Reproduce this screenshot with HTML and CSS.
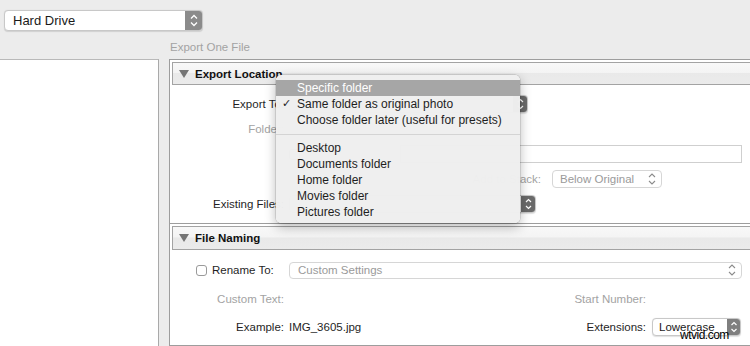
FILE: index.html
```html
<!DOCTYPE html>
<html>
<head>
<meta charset="utf-8">
<title>Export</title>
<link rel="stylesheet" href="styles.css">
</head>
<body>
<div class="topbar">
  <div class="popup popup-lg">
    <span class="ptext">Hard Drive</span>
    <span class="stepper stepper-lg"><svg width="18" height="19" viewBox="0 0 18 19"><path d="M6 7.5 L9 4.5 L12 7.5 M6 11.5 L9 14.5 L12 11.5" fill="none" stroke="#fff" stroke-width="1.3"/></svg></span>
  </div>
</div>
<div class="caption">Export One File</div>
<div class="main">
  <div class="sidebar"></div>
  <div class="panel">
    <section class="section">
      <div class="sec-head"><svg class="tri" width="10" height="8" viewBox="0 0 10 8"><polygon points="0,0 10,0 5,8" fill="#757575"/></svg><span>Export Location</span></div>
      <div class="sec-body body1">
        <div class="row">
          <span class="label">Export To:</span>
          <div class="popup w-export"><span class="ptext"></span><span class="stepper dark"><svg width="15" height="18" viewBox="0 0 15 18"><path d="M5 7 L7.5 4.5 L10 7 M5 11 L7.5 13.5 L10 11" fill="none" stroke="#fff" stroke-width="1.2"/></svg></span></div>
        </div>
        <div class="row">
          <span class="label dim">Folder:</span>
        </div>
        <div class="row">
          <span class="label"></span>
          <span class="sub-wrap"><span class="chk"></span></span>
          <div class="field"></div>
        </div>
        <div class="row">
          <span class="label"></span>
          <span class="stack-label dim"><span>Add to Stack:</span></span>
          <div class="popup disabled w-stack"><span class="ptext">Below Original</span><span class="chev"><svg width="10" height="14" viewBox="0 0 10 14"><path d="M2 5 L5 2 L8 5 M2 9 L5 12 L8 9" fill="none" stroke="#8c8c8c" stroke-width="1.1"/></svg></span></div>
        </div>
        <div class="row r-existing">
          <span class="label">Existing Files:</span>
          <div class="popup w-existing"><span class="ptext"></span><span class="stepper dark"><svg width="15" height="18" viewBox="0 0 15 18"><path d="M5 7 L7.5 4.5 L10 7 M5 11 L7.5 13.5 L10 11" fill="none" stroke="#fff" stroke-width="1.2"/></svg></span></div>
        </div>
      </div>
    </section>
    <section class="section">
      <div class="sec-head head2"><svg class="tri" width="10" height="8" viewBox="0 0 10 8"><polygon points="0,0 10,0 5,8" fill="#757575"/></svg><span>File Naming</span></div>
      <div class="sec-body body2">
        <div class="row">
          <span class="label label-left"><span class="chk"></span><span>Rename To:</span></span>
          <div class="popup disabled grow"><span class="ptext">Custom Settings</span><span class="chev"><svg width="10" height="14" viewBox="0 0 10 14"><path d="M2 5 L5 2 L8 5 M2 9 L5 12 L8 9" fill="none" stroke="#8c8c8c" stroke-width="1.1"/></svg></span></div>
        </div>
        <div class="row r-custom">
          <span class="label dim">Custom Text:</span>
          <span class="right-label dim">Start Number:</span>
          <span class="right-box"></span>
        </div>
        <div class="row r-example">
          <span class="label">Example:</span>
          <span>IMG_3605.jpg</span>
          <span class="right-label">Extensions:</span>
          <div class="popup right-box w-ext"><span class="ptext">Lowercase</span><span class="stepper mid"><svg width="14" height="18" viewBox="0 0 14 18"><path d="M4.5 7 L7 4.5 L9.5 7 M4.5 11 L7 13.5 L9.5 11" fill="none" stroke="#fff" stroke-width="1.2"/></svg></span></div>
        </div>
      </div>
    </section>
  </div>
</div>

<div class="menu">
  <div class="mi hl">Specific folder</div>
  <div class="mi"><span class="check">✓</span>Same folder as original photo</div>
  <div class="mi">Choose folder later (useful for presets)</div>
  <div class="msep"></div>
  <div class="mi">Desktop</div>
  <div class="mi">Documents folder</div>
  <div class="mi">Home folder</div>
  <div class="mi">Movies folder</div>
  <div class="mi">Pictures folder</div>
</div>

<div class="watermark">wtvid.com</div>
</body>
</html>
```
FILE: styles.css
```css
html, body {
  margin: 0;
  padding: 0;
}
body {
  width: 750px;
  height: 346px;
  overflow: hidden;
  position: relative;
  background: #ececec;
  font-family: "Liberation Sans", Arial, sans-serif;
  font-size: 11.5px;
  color: #1f1f1f;
}

/* top bar */
.topbar {
  padding: 10px 0 0 4px;
  height: 21px;
}
.popup {
  box-sizing: border-box;
  height: 18px;
  display: flex;
  align-items: center;
  background: #fff;
  border: 1px solid #c8c8c8;
  border-radius: 4px;
  box-shadow: 0 0.5px 1px rgba(0, 0, 0, 0.12);
  padding-left: 7px;
  white-space: nowrap;
  overflow: hidden;
}
.popup-lg {
  width: 199px;
  height: 21px;
  padding-left: 8px;
  font-size: 13px;
  color: #1a1a1a;
}
.ptext {
  flex: 1;
}
.stepper {
  align-self: stretch;
  margin: -1px -1px -1px auto;
  width: 15px;
  display: flex;
  align-items: center;
  justify-content: center;
  border-radius: 0 4px 4px 0;
}
.stepper-lg {
  width: 18px;
  background: #8b8b8b;
}
.stepper.dark {
  background: #6a6a6a;
}
.stepper.mid {
  width: 14px;
  background: #7f7f7f;
}
.popup.disabled {
  color: #9a9a9a;
  border-color: #d6d6d6;
  box-shadow: none;
}
.chev {
  display: flex;
  align-items: center;
  margin-right: 4px;
}

.caption {
  margin: 9px 0 5px;
  height: 14px;
  line-height: 14px;
  padding-left: 170px;
  color: #a3a3a3;
}

/* main layout */
.main {
  display: flex;
  height: 287px;
}
.sidebar {
  width: 158px;
  flex: none;
  background: #fff;
  border-top: 1px solid #b9b9b9;
  border-right: 1px solid #a9a9a9;
}
.panel {
  flex: 1;
  margin-left: 10px;
  border-left: 1px solid #9d9d9d;
  border-top: 1px solid #9d9d9d;
  background: #fff;
  display: flex;
  flex-direction: column;
}
.section {
  border-bottom: 1px solid #9d9d9d;
}
.sec-head {
  box-sizing: border-box;
  margin: 2px 0 0 2px;
  height: 23px;
  border: 1px solid #a3a3a3;
  border-right: none;
  background: linear-gradient(#f8f8f8 0%, #f4f4f4 45%, #e9e9e9 50%, #ebebeb 100%);
  display: flex;
  align-items: center;
  gap: 6px;
  padding-left: 6px;
  font-weight: bold;
  font-size: 11.5px;
  color: #111;
}
.head2 {
  height: 24px;
}
.tri {
  flex: none;
}
.sec-body {
  box-sizing: border-box;
  background: #fff;
  padding-right: 8px;
}
.body1 {
  height: 138px;
  padding-top: 10px;
}
.body2 {
  height: 95px;
  padding-top: 11px;
}

/* rows */
.row {
  display: flex;
  align-items: center;
  height: 18px;
  line-height: 18px;
  white-space: nowrap;
}
.body1 .row + .row {
  margin-top: 7px;
}
.body1 .r-existing {
  margin-top: 9px;
}
.r-custom {
  margin-top: 11px;
}
.r-example {
  margin-top: 10px;
}
.label {
  box-sizing: border-box;
  width: 114px;
  flex: none;
  margin-right: 5px;
  text-align: right;
}
.label-left {
  display: flex;
  align-items: center;
  padding-left: 26px;
  text-align: left;
}
.dim {
  color: #a3a3a3;
}
.chk {
  box-sizing: border-box;
  width: 11px;
  height: 11px;
  flex: none;
  border: 1px solid #9a9a9a;
  border-radius: 3px;
  background: #fff;
  margin-right: 5px;
}
.sub-wrap {
  display: flex;
  align-items: center;
  width: 111px;
  flex: none;
}
.field {
  flex: 1;
  box-sizing: border-box;
  height: 18px;
  border: 1px solid #cfcfcf;
  background: #fff;
}
.stack-label {
  display: flex;
  align-items: center;
  justify-content: flex-end;
  width: 252px;
  flex: none;
  margin-right: 11px;
}
.w-export {
  width: 239px;
}
.w-existing {
  width: 247px;
}
.w-stack {
  width: 110px;
  padding-left: 7px;
}
.grow {
  flex: 1;
  height: 17px;
  padding-left: 8px;
}
.right-label {
  margin-left: auto;
}
.right-box {
  width: 90px;
  flex: none;
  margin-left: 6px;
}
.w-ext {
  width: 89px;
  margin-right: 1px;
  padding-left: 6px;
  color: #1a1a1a;
}

/* dropdown menu overlay */
.menu {
  position: absolute;
  left: 276px;
  top: 75px;
  width: 244px;
  height: 148px;
  box-sizing: border-box;
  padding-top: 5px;
  background: rgba(239, 239, 239, 0.98);
  border-radius: 5px;
  box-shadow: 0 0 0 0.5px rgba(0, 0, 0, 0.2), 0 4px 12px rgba(0, 0, 0, 0.28);
  font-size: 12px;
  color: #1e1e1e;
}
.mi {
  position: relative;
  height: 16px;
  line-height: 16px;
  padding-left: 21px;
  white-space: nowrap;
}
.mi.hl {
  background: #a6a6a6;
  color: #fff;
}
.check {
  position: absolute;
  left: 6px;
  top: 0;
  font-family: "DejaVu Sans", sans-serif;
  font-size: 11px;
}
.msep {
  height: 1px;
  background: #d4d4d4;
  margin: 6px 0 5px;
}

.watermark {
  position: absolute;
  left: 680px;
  top: 328px;
  line-height: 14px;
  font-size: 12px;
  letter-spacing: -0.5px;
  color: #000;
}
```
